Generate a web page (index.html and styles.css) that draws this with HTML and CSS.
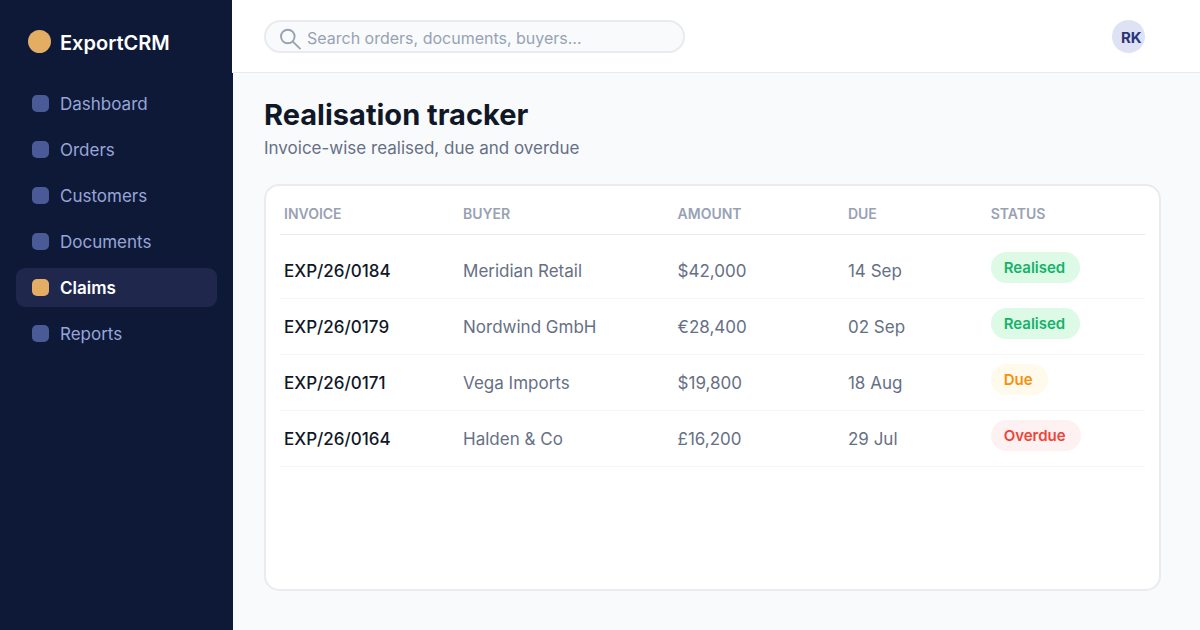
FILE: index.html
```html
<!DOCTYPE html>
<html lang="en">
<head>
    <meta charset="UTF-8">
    <meta name="viewport" content="width=device-width, initial-scale=1.0">
    <title>ExportCRM - Realisation tracker</title>
    <link rel="stylesheet" href="styles.css">
</head>

<body>
    <!-- sidebar -->
    <aside class="sidebar">
        <a class="brand" href="#"><span class="brand-dot"></span><span class="brand-name">ExportCRM</span></a>
        <nav class="nav">
            <a class="nav-item" href="#"><span class="nav-icon"></span>Dashboard</a>
            <a class="nav-item" href="#"><span class="nav-icon"></span>Orders</a>
            <a class="nav-item" href="#"><span class="nav-icon"></span>Customers</a>
            <a class="nav-item" href="#"><span class="nav-icon"></span>Documents</a>
            <a class="nav-item active" href="#" aria-current="page"><span class="nav-icon"></span>Claims</a>
            <a class="nav-item" href="#"><span class="nav-icon"></span>Reports</a>
        </nav>
    </aside>

    <div class="main">
        <!-- top bar -->
        <header class="topbar">
            <form class="search">
                <svg class="search-icon" width="22" height="24" viewBox="0 0 22 24" fill="none" stroke="currentColor" stroke-width="1.9" aria-hidden="true">
                    <circle cx="7.8" cy="10.5" r="6.8"/>
                    <path d="M12.6 15.3l7.9 7.9"/>
                </svg>
                <input class="search-input" type="text" placeholder="Search orders, documents, buyers…" aria-label="Search">
            </form>
            <button class="avatar" type="button">RK</button>
        </header>

        <!-- content -->
        <main class="content">
            <h1 class="title">Realisation tracker</h1>
            <p class="subtitle">Invoice-wise realised, due and overdue</p>

            <section class="card">
                <table class="table">
                    <colgroup>
                        <col class="col-invoice">
                        <col class="col-buyer">
                        <col class="col-amount">
                        <col class="col-due">
                        <col class="col-status">
                    </colgroup>
                    <thead>
                        <tr>
                            <th>INVOICE</th>
                            <th>BUYER</th>
                            <th>AMOUNT</th>
                            <th>DUE</th>
                            <th>STATUS</th>
                        </tr>
                    </thead>
                    <tbody>
                        <tr>
                            <td class="invoice">EXP/26/0184</td>
                            <td>Meridian Retail</td>
                            <td>$42,000</td>
                            <td>14 Sep</td>
                            <td class="status"><span class="badge realised">Realised</span></td>
                        </tr>
                        <tr>
                            <td class="invoice">EXP/26/0179</td>
                            <td>Nordwind GmbH</td>
                            <td>€28,400</td>
                            <td>02 Sep</td>
                            <td class="status"><span class="badge realised">Realised</span></td>
                        </tr>
                        <tr>
                            <td class="invoice">EXP/26/0171</td>
                            <td>Vega Imports</td>
                            <td>$19,800</td>
                            <td>18 Aug</td>
                            <td class="status"><span class="badge due">Due</span></td>
                        </tr>
                        <tr>
                            <td class="invoice">EXP/26/0164</td>
                            <td>Halden &amp; Co</td>
                            <td>£16,200</td>
                            <td>29 Jul</td>
                            <td class="status"><span class="badge overdue">Overdue</span></td>
                        </tr>
                    </tbody>
                </table>
            </section>
        </main>
    </div>
</body>
</html>
```
FILE: styles.css
```css
* {
    box-sizing: border-box;
}
body {
    margin: 0;
    min-height: 100vh;
    display: flex;
    font-family: Inter, "Liberation Sans", sans-serif;
    font-size: 17px;
    color: #101828;
    background: #f9fafc;
}
a {
    text-decoration: none;
}

/* sidebar */
.sidebar {
    flex: none;
    width: 233px;
    padding: 26px 16px;
    background: #0e1938;
}
.brand {
    display: flex;
    align-items: center;
    gap: 9px;
    height: 31px;
    padding-left: 12px;
    font-size: 20px;
    font-weight: 600;
    color: #fff;
}
.brand-dot {
    width: 23px;
    height: 23px;
    border-radius: 50%;
    background: #e3ae64;
}
.brand-name {
    padding-top: 3px;
}
.nav {
    display: flex;
    flex-direction: column;
    gap: 7px;
    margin-top: 27px;
}
.nav-item {
    display: flex;
    align-items: center;
    gap: 11px;
    height: 39px;
    padding: 0 16px;
    border-radius: 9px;
    color: #98a5d8;
}
.nav-icon {
    width: 17px;
    height: 17px;
    border-radius: 5px;
    background: #4a5a97;
}
.nav-item.active {
    font-weight: 600;
    color: #fff;
    background: #20274d;
}
.nav-item.active .nav-icon {
    background: #e3ae64;
}

/* top bar */
.main {
    flex: 1;
    min-width: 0;
    display: flex;
    flex-direction: column;
}
.topbar {
    display: flex;
    align-items: center;
    justify-content: space-between;
    height: 73px;
    margin-left: -1px;
    padding: 0 55px 0 32px;
    background: #fff;
    border-bottom: 1px solid #eaebef;
}
.search {
    display: flex;
    align-items: center;
    gap: 5px;
    width: 421px;
    height: 33px;
    padding: 3px 14px 0;
    border: 2px solid #eaebef;
    border-radius: 17px;
    background: #f9fafc;
}
.search-icon {
    flex: none;
    color: #98a2b3;
}
.search-input {
    flex: 1;
    min-width: 0;
    padding: 0;
    border: 0;
    outline: none;
    background: none;
    font: inherit;
    font-size: 16px;
    color: #101828;
}
.search-input::placeholder {
    color: #98a2b3;
    opacity: 1;
}
.avatar {
    flex: none;
    width: 33px;
    height: 33px;
    padding: 2px 0 0 9px;
    border: 0;
    border-radius: 50%;
    font: inherit;
    font-size: 15px;
    font-weight: 700;
    text-align: left;
    color: #2a3578;
    background: #dee2f4;
    cursor: pointer;
}

/* content */
.content {
    flex: 1;
    display: flex;
    flex-direction: column;
    padding: 24px 39px 39px 31px;
}
.title {
    margin: 0;
    font-size: 29px;
    line-height: 36px;
    font-weight: 700;
}
.subtitle {
    margin: 3px 0 24px;
    line-height: 24px;
    color: #667085;
}
.card {
    flex: 1;
    padding: 6px 14px;
    border: 2px solid #eaebef;
    border-radius: 15px;
    background: #fff;
}
.table {
    width: 100%;
    table-layout: fixed;
    border-spacing: 0;
    text-align: left;
}
.col-invoice {
    width: 20.7%;
}
.col-buyer {
    width: 24.8%;
}
.col-amount {
    width: 19.7%;
}
.col-due {
    width: 16.5%;
}
.col-status {
    width: 18.3%;
}
th {
    height: 43px;
    padding: 0 4px;
    border-bottom: 1px solid #eaebef;
    font-size: 14px;
    font-weight: 600;
    color: #98a2b3;
}
tbody::before {
    content: "";
    display: block;
    height: 8px;
}
td {
    height: 56px;
    padding: 0 4px;
    border-bottom: 1px solid #f5f6f8;
    color: #667085;
}
.invoice {
    font-weight: 500;
    color: #101828;
}
.status {
    padding-top: 9px;
    vertical-align: top;
}
.badge {
    display: inline-block;
    padding: 0 15px 0 13px;
    border-radius: 16px;
    font-size: 15px;
    line-height: 31px;
    font-weight: 600;
}
.realised {
    color: #17b26a;
    background: #dcfae6;
}
.due {
    color: #f79009;
    background: #fffaeb;
}
.overdue {
    color: #f04438;
    background: #fef1f1;
}
```
